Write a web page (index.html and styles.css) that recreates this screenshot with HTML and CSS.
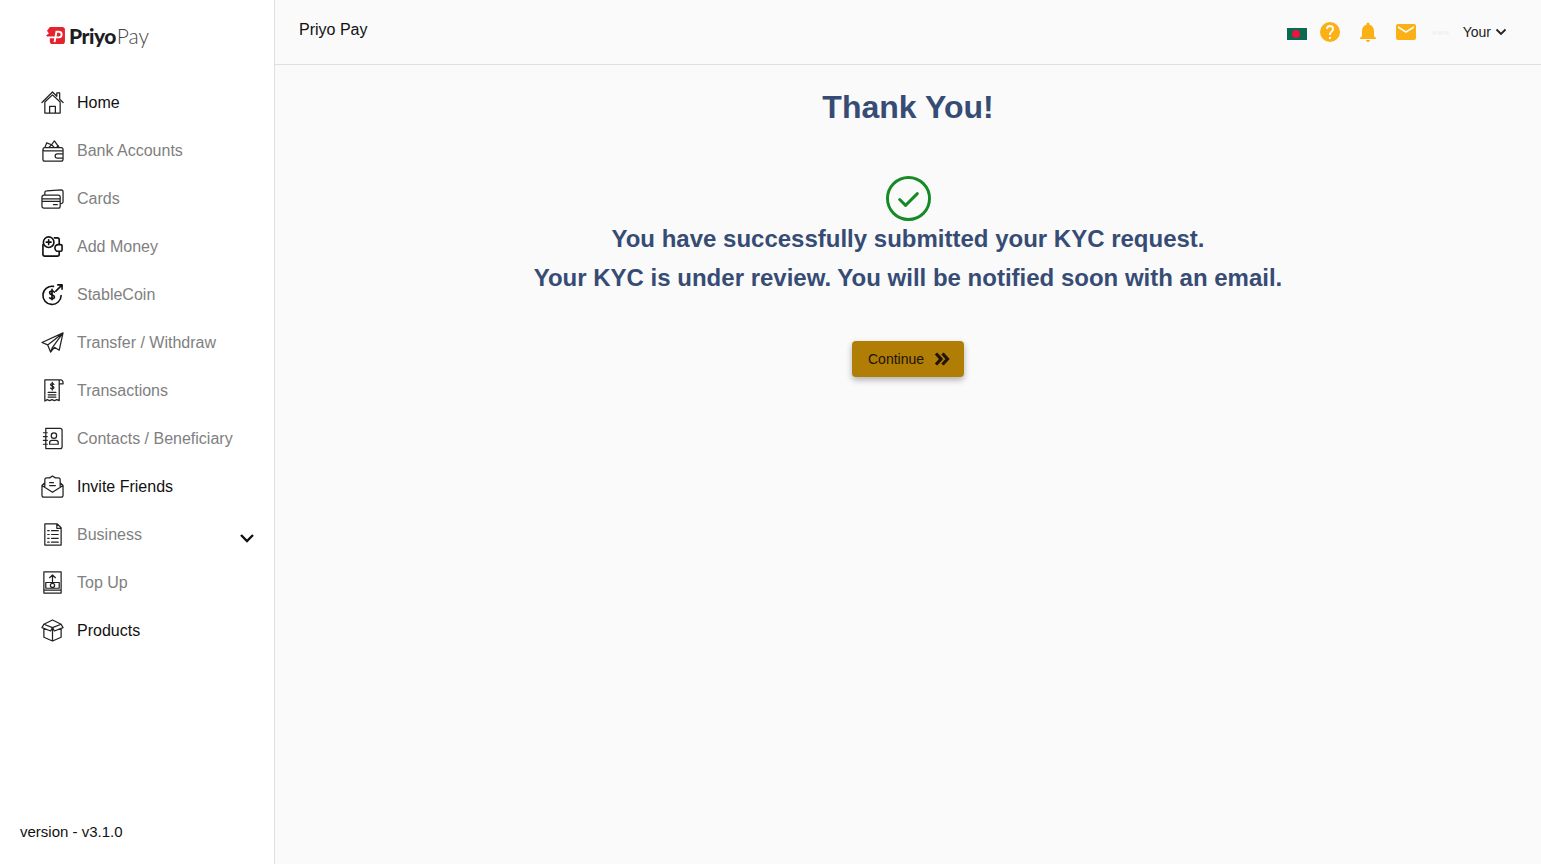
FILE: index.html
```html
<!DOCTYPE html>
<html lang="en">

<head>
    <meta charset="UTF-8">
    <title>Priyo Pay</title>
    <link rel="stylesheet" href="styles.css">
</head>

<body>
    <aside class="sidebar">
        <div class="logo">
            <svg class="logo-mark" viewBox="0 0 20 18"><path fill="#e5232e" d="M4 0h13a3 3 0 0 1 3 3v12a3 3 0 0 1-3 3H7a3 3 0 0 1-3-3v-3L0 9l3-2-2-3z"/><path fill="none" stroke="#fff" stroke-width="2" d="M9 16l2-11h2.500a2.500 2.500 0 0 1 0 6H2"/></svg>
            <span class="logo-bold">Priyo</span><span class="logo-light">Pay</span>
        </div>

        <nav class="nav">
            <a class="nav-item dark">
                <svg class="nav-icon" viewBox="0 0 24 24"><path d="M1 12L12 1l4.500 4.500V2h3v6.500L23 12M4 11.500L12 4l8 7.500M4 11.500V23h16V11.500M9 23v-7h6v7"/></svg>
                Home
            </a>
            <a class="nav-item">
                <svg class="nav-icon" viewBox="0 0 24 24"><path d="M2 11v10a2 2 0 0 0 2 2h17a2 2 0 0 0 2-2V11a2 2 0 0 0-2-2H3.500a1.800 1.800 0 0 0 0 3.500H23M4 9l2-5 5 2 3-4 5 7M8 9l3-3 3 3M16 9l2-2M17 15.500h6v4.500h-6a2.200 2.200 0 0 1 0-4.500z"/></svg>
                Bank Accounts
            </a>
            <a class="nav-item">
                <svg class="nav-icon" viewBox="0 0 24 24"><path d="M1 10.500a2 2 0 0 1 2-2h15a2 2 0 0 1 2 2V20a2 2 0 0 1-2 2H3a2 2 0 0 1-2-2zM1 12.500h19M1 15h19M13 18.500h4M4 8.500V6a2 2 0 0 1 2-2l15-1a2 2 0 0 1 2 2v10a2 2 0 0 1-3 2"/></svg>
                Cards
            </a>
            <a class="nav-item">
                <svg class="nav-icon heavy" viewBox="0 0 24 24"><circle cx="8" cy="7.500" r="5.500"/><path d="M8 5v5M5.500 7.500h5M14 3h3a2 2 0 0 1 2 2v4M2 10v10a2 2 0 0 0 2 2h13a2 2 0 0 0 2-2v-3M19 10h1.500a1.500 1.500 0 0 1 1.500 1.500v4a1.500 1.500 0 0 1-1.500 1.500H18a3.500 3.500 0 0 1 0-7z"/></svg>
                Add Money
            </a>
            <a class="nav-item">
                <svg class="nav-icon heavy" viewBox="0 0 24 24"><path d="M13 3.500a9.500 9.500 0 1 0 8 9.500M15.500 8.500L22 2M17.500 2H22v4.500M14 9.500c-1-1.500-5-1.500-5 .8 0 2.700 5 1.500 5 4.300 0 2.400-4 2.200-5 .9M11.500 6.500v11"/></svg>
                StableCoin
            </a>
            <a class="nav-item">
                <svg class="nav-icon" viewBox="0 0 24 24"><path d="M23 2L1 12l6 2.500 3 7.500 4-5 5 3zM23 2L7 14.500M23 2L12 17l-2 5"/></svg>
                Transfer / Withdraw
            </a>
            <a class="nav-item">
                <svg class="nav-icon" viewBox="0 0 24 24"><path d="M4 23V1h15v21.500l-2.500-1-2.500 1-2.500-1-2.500 1-2.500-1zM19 1h1.500A2.500 2.500 0 0 1 23 3.500V5h-4M7.500 14h8M7.500 16.500h8M7.500 19h8M13.500 5.500c-.8-1-3.500-1-3.500.6s3.500 1 3.500 2.800-2.700 1.600-3.500.6M11.800 3.500v8"/></svg>
                Transactions
            </a>
            <a class="nav-item">
                <svg class="nav-icon" viewBox="0 0 24 24"><path d="M5 1.500h15a2 2 0 0 1 2 2v17a2 2 0 0 1-2 2H5zM2.500 6h4M2.500 10h4M2.500 14h4M2.500 18h4"/><circle cx="13.500" cy="9" r="2.800"/><path d="M9 18v-1.500a2.500 2.500 0 0 1 2.500-2.500h4a2.500 2.500 0 0 1 2.500 2.500V18z"/></svg>
                Contacts / Beneficiary
            </a>
            <a class="nav-item dark">
                <svg class="nav-icon" viewBox="0 0 24 24"><path d="M4 8l-3 3v10a2 2 0 0 0 2 2h18a2 2 0 0 0 2-2V11l-3-3M1 11l11 7 11-7M4 13V5a2 2 0 0 1 2-2h3l3-2 3 2h3a2 2 0 0 1 2 2v8M9 8h4M9 11h6"/></svg>
                Invite Friends
            </a>
            <a class="nav-item">
                <svg class="nav-icon" viewBox="0 0 24 24"><path d="M4 1h13l4 4v18H4zM16.500 1v4.500H21M7 8h1.500M11 8h7M7 12h1.500M11 12h7M7 16h1.500M11 16h7M7 20h1.500M11 20h7"/></svg>
                Business
                <svg class="nav-caret" viewBox="0 0 16 10"><path d="M2 2l6 6 6-6"/></svg>
            </a>
            <a class="nav-item">
                <svg class="nav-icon" viewBox="0 0 24 24"><path d="M3 1h18v22H3zM3 20h18M12 11V4M9 7l3-3 3 3M5 12h14v6H5z"/><circle cx="12" cy="15" r="2.200"/></svg>
                Top Up
            </a>
            <a class="nav-item dark">
                <svg class="nav-icon" viewBox="0 0 24 24"><path d="M12 9l9-3.500L12 1 3 5.500zM3 5.500L1 9l9 3.500L12 9l2 3.500L23 9l-2-3.500M3 10v9l9 4 9-4v-9M12 23V9"/></svg>
                Products
            </a>
        </nav>

        <div class="version">version - v3.1.0</div>
    </aside>

    <div class="page">
        <header class="topbar">
            <div class="topbar-title">Priyo Pay</div>
            <div class="topbar-right">
                <svg class="flag" viewBox="0 0 20 12"><rect width="20" height="12" fill="#0b6a4f"/><circle cx="9" cy="6" r="4" fill="#e5173f"/></svg>
                <svg class="top-icon" viewBox="0 0 24 24"><path fill="#fbb116" d="M12 2a10 10 0 1 0 0 20 10 10 0 0 0 0-20zm1 17h-2v-2h2zm2.100-7.700l-.9.9c-.8.7-1.200 1.300-1.200 2.800h-2v-.5c0-1.100.4-2.100 1.200-2.800l1.200-1.300c.4-.3.600-.8.600-1.400a2 2 0 0 0-4 0H8a4 4 0 0 1 8 0c0 .9-.4 1.700-.9 2.300z"/></svg>
                <svg class="top-icon" viewBox="0 0 24 24"><path fill="#fbb116" d="M12 22a2 2 0 0 0 2-2h-4a2 2 0 0 0 2 2zm6-6v-5c0-3.100-1.600-5.600-4.500-6.300V4a1.500 1.500 0 0 0-3 0v.7C7.600 5.400 6 7.900 6 11v5l-2 2v1h16v-1z"/></svg>
                <svg class="top-icon" viewBox="0 0 24 24"><path fill="#fbb116" d="M20 4H4a2 2 0 0 0-2 2v12a2 2 0 0 0 2 2h16a2 2 0 0 0 2-2V6a2 2 0 0 0-2-2zm0 4l-8 5-8-5V6l8 5 8-5z"/></svg>
                <div class="user">
                    <span class="user-ghost">www</span>
                    <span class="user-name">Your</span>
                    <svg class="user-caret" viewBox="0 0 12 8"><path d="M1.500 1.500L6 6l4.500-4.500"/></svg>
                </div>
            </div>
        </header>

        <main class="content">
            <h1 class="title">Thank You!</h1>
            <svg class="check" viewBox="0 0 46 46"><circle cx="23" cy="23" r="21.500"/><path d="M14 24l6 6 12-12"/></svg>
            <p class="message">You have successfully submitted your KYC request.</p>
            <p class="message">Your KYC is under review. You will be notified soon with an email.</p>
            <button class="continue-btn">
                Continue
                <svg class="continue-icon" viewBox="0 0 16 14"><path d="M2 1.500L7 7l-5 5.500M8.500 1.500L13.500 7l-5 5.500"/></svg>
            </button>
        </main>
    </div>
</body>

</html>
```

FILE: styles.css
```css
* {
    box-sizing: border-box;
}

body {
    margin: 0;
    height: 864px;
    overflow: hidden;
    display: flex;
    background-color: #fafafa;
    font-family: "Liberation Sans", Arial, sans-serif;
}

.sidebar {
    width: 275px;
    height: 100%;
    flex-shrink: 0;
    display: flex;
    flex-direction: column;
    background-color: #fff;
    border-right: 1px solid #e0e0e0;
}

.logo {
    height: 79px;
    padding: 0 0 9px 46px;
    display: flex;
    align-items: center;
    color: #1d1d1f;
    font-family: Lato, sans-serif;
    font-size: 21px;
}

.logo-mark {
    width: 19px;
    height: 17px;
    margin-right: 4px;
}

.logo-bold {
    font-weight: 900;
    letter-spacing: -0.5px;
}

.logo-light {
    margin-left: 1px;
    font-size: 21px;
    font-weight: 300;
    color: #444;
}

.nav {
    flex: 1;
    display: flex;
    flex-direction: column;
}

.nav-item {
    height: 48px;
    padding-left: 41px;
    display: flex;
    align-items: center;
    gap: 13px;
    font-size: 16px;
    color: #808080;
}

.nav-item.dark {
    color: #111;
}

.nav-icon {
    width: 23px;
    height: 23px;
    margin-top: -2px;
    fill: none;
    stroke: #222;
    stroke-width: 1.300;
    stroke-linejoin: round;
    stroke-linecap: round;
}

.nav-icon.heavy {
    stroke: #111;
    stroke-width: 1.700;
}

.nav-caret {
    width: 16px;
    height: 10px;
    margin: 5px 19px 0 auto;
    fill: none;
    stroke: #111;
    stroke-width: 2.400;
}

.version {
    height: 41px;
    padding-left: 20px;
    font-size: 15px;
    color: #111;
}

.page {
    flex: 1;
    display: flex;
    flex-direction: column;
}

.topbar {
    height: 65px;
    padding: 0 34px 0 24px;
    display: flex;
    justify-content: space-between;
    border-bottom: 1px solid #e0e0e0;
}

.topbar-title {
    padding-top: 21px;
    font-size: 16px;
    color: #111;
}

.topbar-right {
    display: flex;
    align-items: center;
    height: 64px;
}

.flag {
    width: 20px;
    height: 12px;
    margin-top: 3px;
    margin-right: 11px;
}

.top-icon {
    width: 24px;
    height: 24px;
    margin-right: 14px;
}

.user {
    display: flex;
    align-items: center;
    font-size: 14px;
    color: #222;
}

.user-ghost {
    width: 31px;
    font-size: 7px;
    letter-spacing: 1px;
    color: #ececec;
}

.user-caret {
    width: 12px;
    height: 8px;
    margin-left: 4px;
    fill: none;
    stroke: #222;
    stroke-width: 1.800;
}

.content {
    flex: 1;
    display: flex;
    flex-direction: column;
    align-items: center;
}

.title {
    margin: 24px 0 0;
    font-size: 32px;
    line-height: 37px;
    color: #364c75;
}

.check {
    width: 45px;
    height: 45px;
    margin-top: 50px;
    fill: none;
    stroke: #158a25;
    stroke-width: 3;
    stroke-linecap: round;
    stroke-linejoin: round;
}

.message {
    margin: 0;
    height: 39px;
    font-size: 24px;
    font-weight: 700;
    line-height: 39px;
    color: #364c75;
}

.check + .message {
    margin-top: -2px;
}

.continue-btn {
    width: 112px;
    height: 36px;
    margin-top: 44px;
    padding-left: 16px;
    display: flex;
    align-items: center;
    gap: 10px;
    border: none;
    border-radius: 4px;
    background-color: #b07d05;
    color: #21130a;
    font-family: "Liberation Sans", Arial, sans-serif;
    font-size: 14px;
    box-shadow: 0 3px 6px rgba(0, 0, 0, 0.3);
}

.continue-icon {
    width: 16px;
    height: 14px;
    fill: none;
    stroke: #21130a;
    stroke-width: 3.200;
}
```
